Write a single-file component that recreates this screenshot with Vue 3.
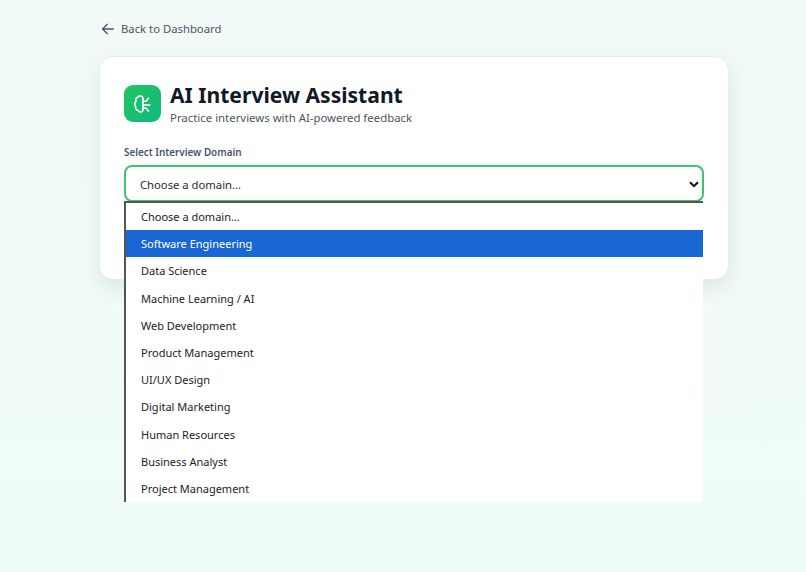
<script setup>
const options = [
  'Choose a domain...',
  'Software Engineering',
  'Data Science',
  'Machine Learning / AI',
  'Web Development',
  'Product Management',
  'UI/UX Design',
  'Digital Marketing',
  'Human Resources',
  'Business Analyst',
  'Project Management',
]
</script>

<template>
  <div class="page">
    <div class="wrap">
      <a class="back">
        <svg width="16" height="16" viewBox="0 0 24 24" fill="none" stroke="#475569" stroke-width="2" stroke-linecap="round" stroke-linejoin="round"><path d="M20 12H4"/><path d="M11 19l-7-7 7-7"/></svg>
        <span>Back to Dashboard</span>
      </a>
      <section class="card">
        <header class="head">
          <div class="logo">
            <svg width="22" height="22" viewBox="0 0 24 24" fill="none" stroke="#fff" stroke-width="1.700" stroke-linecap="round" stroke-linejoin="round">
              <path d="M12 6a3 3 0 0 0-5.400-1.500A3 3 0 0 0 4.500 9a3.500 3.500 0 0 0-.5 5.500 3.500 3.500 0 0 0 2.500 4.500 3 3 0 0 0 5.500 0"/>
              <path d="M12 6v13"/><path d="M12 9h3.500L18 5.500"/><path d="M12 13h7.500"/><path d="M12 16.500h3.500l2.500 3.500"/>
            </svg>
          </div>
          <div class="titles">
            <h1>AI Interview Assistant</h1>
            <p>Practice interviews with AI-powered feedback</p>
          </div>
        </header>
        <label class="label">Select Interview Domain</label>
        <div class="select-box">
          <div class="select">
            <span>Choose a domain...</span>
            <svg width="10" height="7" viewBox="0 0 10 7" fill="none" stroke="#111" stroke-width="2"><path d="M1 1.200 5 5.200l4-4"/></svg>
          </div>
          <ul class="menu">
            <li v-for="(o, i) in options" :key="o" :class="{ active: i === 1 }">{{ o }}</li>
          </ul>
        </div>
      </section>
    </div>
  </div>
</template>

<style scoped>
.page {
  min-height: 572px;
  box-sizing: border-box;
  background: linear-gradient(180deg, #f2faf8 0%, #f0fdf6 100%);
  padding: 20px 77px 0 99px;
  font-family: "Noto Sans", "Open Sans", sans-serif;
}
.wrap { display: flex; flex-direction: column; }
.back {
  display: flex;
  align-items: center;
  gap: 5px;
  height: 17px;
  padding-left: 1px;
  color: #4b5563;
  font-size: 11.300px;
}
.card {
  margin-top: 19px;
  height: 224px;
  box-sizing: border-box;
  background: #fff;
  border: 1px solid #e8eeeb;
  border-radius: 14px;
  box-shadow: 0 8px 22px rgba(15, 60, 40, 0.1);
  padding: 26px 24px 0;
}
.head { display: flex; align-items: center; gap: 9px; }
.logo {
  width: 37px;
  height: 37px;
  margin-bottom: 2px;
  border-radius: 9px;
  background: linear-gradient(135deg, #22c55e, #10b981);
  display: flex;
  align-items: center;
  justify-content: center;
}
.titles h1 {
  margin: 0 0 3px;
  font-size: 21.100px;
  line-height: 24px;
  font-weight: 700;
  color: #111827;
}
.titles p {
  margin: 0;
  font-size: 11.400px;
  line-height: 16px;
  color: #4b5563;
}
.label {
  display: block;
  margin-top: 19px;
  font-size: 9.900px;
  line-height: 14px;
  font-weight: 600;
  color: #475569;
}
.select-box { position: relative; margin-top: 6px; }
.select {
  height: 37px;
  box-sizing: border-box;
  border: 2.500px solid #3cc46f;
  border-radius: 8px;
  padding: 1px 3px 0 14px;
  display: flex;
  align-items: center;
  justify-content: space-between;
  font-size: 11.250px;
  color: #1f2937;
  background: #fff;
}
.menu {
  position: absolute;
  left: 0;
  right: 1px;
  top: 36px;
  height: 301px;
  margin: 0;
  padding: 0;
  list-style: none;
  box-sizing: border-box;
  background: #fff;
  border-top: 2px solid #555;
  border-left: 2px solid #555;
  overflow: hidden;
  font-size: 11px;
  color: #222;
}
.menu li {
  height: 27.200px;
  line-height: 28.800px;
  padding-left: 15px;
}
.menu li.active { background: #1967d2; color: #fff; }
</style>
<style>
body { margin: 0; }
</style>
